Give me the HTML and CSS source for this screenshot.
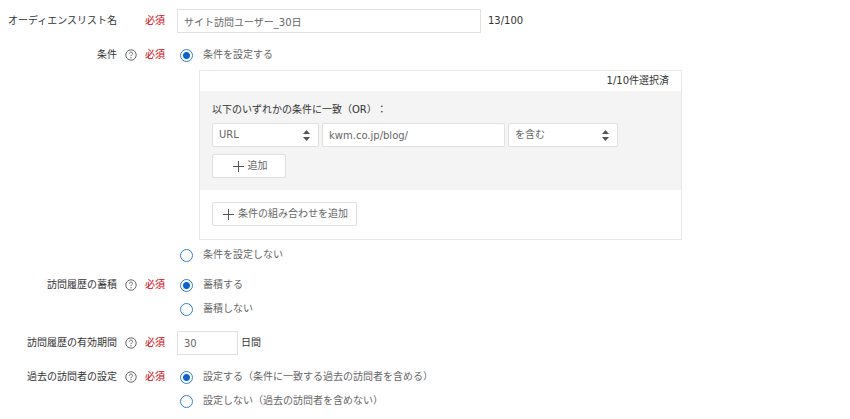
FILE: index.html
```html
<!DOCTYPE html>
<html lang="ja">
<head>
    <meta charset="UTF-8">
    <title>オーディエンスリスト</title>
    <link rel="stylesheet" href="styles.css">
</head>
<body>
<svg class="defs" width="0" height="0">
    <symbol id="help" viewBox="0 0 12 12">
        <circle cx="6" cy="6" r="5.2" fill="none" stroke="#555" stroke-width="0.9"/>
        <path d="M4.400 4.700C4.400 3.600 5.100 3.100 6 3.100s1.600.6 1.600 1.400C7.600 5.600 6 5.700 6 7.100" fill="none" stroke="#555" stroke-width="0.9"/>
        <circle cx="6" cy="8.700" r="0.6" fill="#555"/>
    </symbol>
    <symbol id="plus" viewBox="0 0 11 11">
        <path d="M5.500 0v11M0 5.500h11" stroke="#555" stroke-width="1"/>
    </symbol>
    <symbol id="arrows" viewBox="0 0 7 11">
        <path d="M0 4L3.500 0L7 4zM0 7L3.500 11L7 7z" fill="#555"/>
    </symbol>
</svg>
<form class="form">
    <div class="row">
        <label class="name" for="listName">オーディエンスリスト名</label>
        <span class="help"></span>
        <span class="must">必須</span>
        <div class="field line">
            <input class="text long" id="listName" type="text" value="サイト訪問ユーザー_30日">
            <span class="count">13/100</span>
        </div>
    </div>

    <div class="row cond" role="radiogroup" aria-labelledby="condName">
        <span class="name" id="condName">条件</span>
        <svg class="help"><use href="#help"/></svg>
        <span class="must">必須</span>
        <div class="field">
            <label class="radio"><input type="radio" name="cond" checked>条件を設定する</label>
            <div class="panel">
                <p class="selected">1/10件選択済</p>
                <div class="group">
                    <p class="lead">以下のいずれかの条件に一致（OR）：</p>
                    <div class="rule">
                        <div class="select">
                            <select aria-label="対象"><option>URL</option></select>
                            <svg class="arrows"><use href="#arrows"/></svg>
                        </div>
                        <input class="text url" type="text" aria-label="値" value="kwm.co.jp/blog/">
                        <div class="select">
                            <select aria-label="一致条件"><option>を含む</option></select>
                            <svg class="arrows"><use href="#arrows"/></svg>
                        </div>
                    </div>
                    <button class="btn add" type="button"><svg class="plus"><use href="#plus"/></svg>追加</button>
                </div>
                <div class="foot">
                    <button class="btn" type="button"><svg class="plus"><use href="#plus"/></svg>条件の組み合わせを追加</button>
                </div>
            </div>
            <label class="radio"><input type="radio" name="cond">条件を設定しない</label>
        </div>
    </div>

    <div class="row" role="radiogroup" aria-labelledby="storeName">
        <span class="name" id="storeName">訪問履歴の蓄積</span>
        <svg class="help"><use href="#help"/></svg>
        <span class="must">必須</span>
        <div class="field">
            <label class="radio"><input type="radio" name="store" checked>蓄積する</label>
            <label class="radio"><input type="radio" name="store">蓄積しない</label>
        </div>
    </div>

    <div class="row">
        <label class="name" for="term">訪問履歴の有効期間</label>
        <svg class="help"><use href="#help"/></svg>
        <span class="must">必須</span>
        <div class="field line">
            <input class="text short" id="term" type="text" value="30">
            <span class="unit">日間</span>
        </div>
    </div>

    <div class="row" role="radiogroup" aria-labelledby="pastName">
        <span class="name" id="pastName">過去の訪問者の設定</span>
        <svg class="help"><use href="#help"/></svg>
        <span class="must">必須</span>
        <div class="field">
            <label class="radio"><input type="radio" name="past" checked>設定する（条件に一致する過去の訪問者を含める）</label>
            <label class="radio"><input type="radio" name="past">設定しない（過去の訪問者を含めない）</label>
        </div>
    </div>
</form>
</body>
</html>
```

FILE: styles.css
```css
body, p {
    margin: 0; padding: 0;
}
body {
    background: #fff;
    text-spacing-trim: space-all;
}
* {
    box-sizing: border-box;
}
body, input, select, button {
    font: 10px/24px "DejaVu Sans", "Noto Sans CJK JP", sans-serif;
    color: #333;
}
svg {
    display: block;
}
.defs {
    position: absolute;
}
.form {
    display: flex; flex-direction: column; gap: 10px;
    padding-top: 9px;
}

/* label / help / required / field */
.row {
    display: grid; grid-template-columns: 117px 12px 20px minmax(0, 1fr);
    column-gap: 8px; align-items: start;
}
.cond {
    margin-bottom: -4px;
}
.name {
    text-align: right; white-space: nowrap;
}
.help {
    width: 12px; height: 12px; margin-top: 6px;
}
.must {
    color: #d0000a; white-space: nowrap;
}
.field {
    padding-left: 4px;
}
.line {
    display: flex; align-items: center;
}

.text, .select select, .btn {
    height: 24px; border: 1px solid #e0e0e0; background: #fff; color: #666;
    line-height: 22px; outline: none;
}
.text {
    padding: 0 6px; min-width: 0;
}
.long {
    width: 304px;
}
.short {
    width: 61px;
}
.count {
    margin-left: 7px;
}
.unit {
    margin-left: 3px;
}

.radio {
    display: flex; align-items: center; gap: 10px;
    height: 24px; padding-left: 3px; color: #666;
}
.radio input {
    appearance: none; flex: none;
    width: 13px; height: 13px; margin: 0;
    border: 1px solid #2f7fd6; border-radius: 50%; background: #fff;
}
.radio input:checked {
    background: radial-gradient(circle, #0a62cc 3px, #fff 4px);
}

.panel {
    max-width: 483px; margin: 3px 0 3px 22px;
    border: 1px solid #e8e8e8;
}
.selected {
    padding-right: 12px; text-align: right; line-height: 20px;
}
.group {
    padding: 7px 12px 12px; background: #f4f4f4;
}
.lead {
    margin-bottom: 1px;
}
.rule {
    display: flex; gap: 3px;
    margin-bottom: 7px;
}
.select {
    position: relative; width: 110px;
}
.select select {
    appearance: none; width: 100%; padding: 0 6px; border-radius: 2px;
}
.select:first-child {
    width: 107px;
}
.arrows {
    position: absolute; right: 9px; top: 7px;
    width: 7px; height: 11px; pointer-events: none;
}
.url {
    width: 183px; border-radius: 2px;
}
.btn {
    display: flex; align-items: center; justify-content: center; gap: 4px;
    padding: 0 8px 0 10px; border-radius: 2px; cursor: pointer;
}
.add {
    width: 74px;
}
.plus {
    width: 11px; height: 11px;
}
.foot {
    padding: 12px 12px 13px;
}
```
